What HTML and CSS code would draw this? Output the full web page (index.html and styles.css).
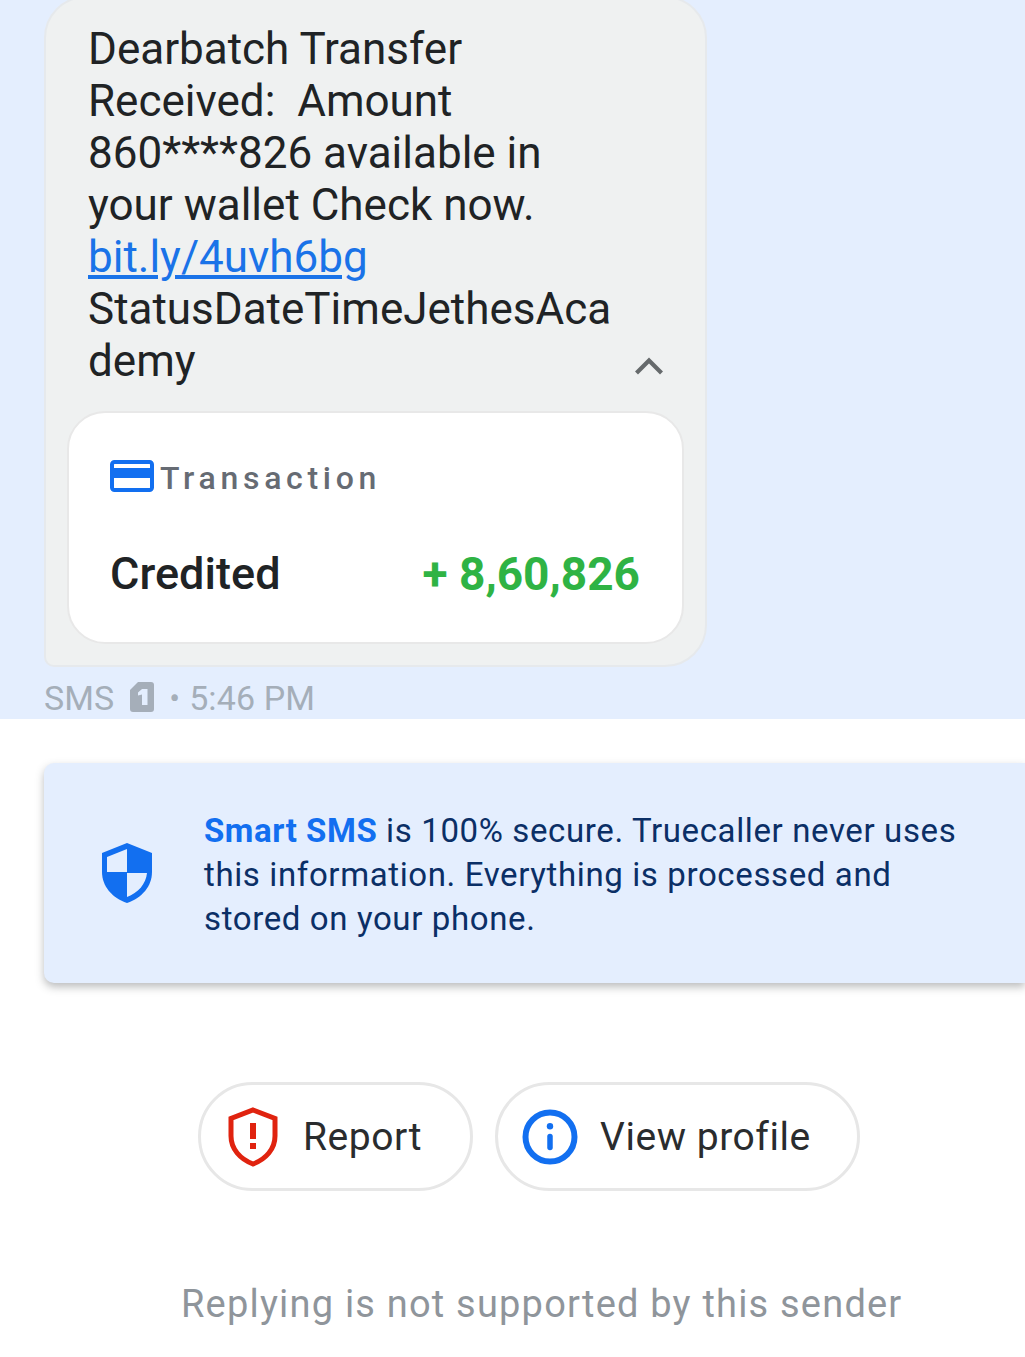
FILE: index.html
```html
<!DOCTYPE html>
<html lang="en">
<head>
<meta charset="utf-8">
<title>Message</title>
<link rel="stylesheet" href="styles.css">
</head>
<body>
<main class="screen">
  <section class="thread">
    <article class="bubble">
      <div class="message">
        <p class="message-text">Dearbatch Transfer<br>Received:&nbsp; Amount<br>860****826 available in<br>your wallet Check now.<br><a class="link" href="#">bit.ly/4uvh6bg</a><br>StatusDateTimeJethesAca<br>demy</p>
        <svg class="chevron" viewBox="0 0 30 18" aria-hidden="true"><path d="M2.500 16 15 3.500 27.500 16" fill="none" stroke="#666a6c" stroke-width="4.200"/></svg>
      </div>
      <div class="card">
        <div class="card-head">
          <svg class="card-icon" viewBox="0 0 44 32" aria-hidden="true"><rect x="2" y="2" width="40" height="28" rx="2.500" fill="none" stroke="#126ff0" stroke-width="4"/><rect x="2" y="8" width="40" height="10" fill="#126ff0"/></svg>
          <span class="card-title">Transaction</span>
        </div>
        <div class="card-row">
          <span class="card-label">Credited</span>
          <span class="card-amount">+ 8,60,826</span>
        </div>
      </div>
    </article>
    <div class="meta">
      <span>SMS</span>
      <svg class="sim" viewBox="0 0 24 30" aria-hidden="true"><path d="M8 0h13a3 3 0 0 1 3 3v24a3 3 0 0 1-3 3H3a3 3 0 0 1-3-3V8z" fill="#a5aeb9"/><path d="M12 7h5.500v16H12V12.500L8 13.500V10.500z" fill="#e4eefe"/></svg>
      <span class="meta-dot">•</span>
      <span>5:46 PM</span>
    </div>
  </section>
  <section class="lower">
    <aside class="notice">
      <svg class="notice-icon" viewBox="0 0 50 60" aria-hidden="true"><path d="M25 0 50 10v19c0 14-10 26-25 31C10 55 0 43 0 29V10z" fill="#126ff0"/><path d="M25 6 5 14v15h20zM25 30v24c11-4 19-13 20-24z" fill="#e4eefe"/></svg>
      <p class="notice-text"><strong class="notice-strong">Smart SMS</strong> is 100% secure. Truecaller never uses this information. Everything is processed and stored on your phone.</p>
    </aside>
    <div class="actions">
      <button class="pill pill-report" type="button">
        <svg class="pill-icon-report" viewBox="0 0 50 60" aria-hidden="true"><path d="M25 3 47 11.500V29c0 13-9 23-22 28C12 52 3 42 3 29V11.500z" fill="none" stroke="#e0230f" stroke-width="5"/><rect x="22" y="16" width="6" height="16" fill="#e0230f"/><rect x="22" y="36" width="6" height="6" fill="#e0230f"/></svg>
        <span>Report</span>
      </button>
      <button class="pill pill-profile" type="button">
        <svg class="pill-icon-info" viewBox="0 0 56 56" aria-hidden="true"><circle cx="28" cy="28" r="24.500" fill="none" stroke="#126ff0" stroke-width="6"/><circle cx="28" cy="17.300" r="3.200" fill="#126ff0"/><path d="M28 27.500V38.500" stroke="#126ff0" stroke-width="5.500" stroke-linecap="round"/></svg>
        <span>View profile</span>
      </button>
    </div>
    <p class="reply-note">Replying is not supported by this sender</p>
  </section>
</main>
</body>
</html>
```
FILE: styles.css
```css
* {
  box-sizing: border-box;
}

html,
body {
  margin: 0;
  padding: 0;
  background: #fff;
}

.screen {
  width: 1025px;
  height: 1357px;
  overflow: hidden;
  font-family: Roboto, "Liberation Sans", sans-serif;
}

.thread {
  height: 719px;
  overflow: hidden;
  background: #e4eefe;
  padding-left: 44px;
}

.bubble {
  width: 663px;
  height: 671px;
  margin-top: -4px;
  padding: 25px 21px 21px;
  background: #eff1f1;
  border: 2px solid #e6e9ec;
  border-radius: 42px 42px 42px 10px;
}

.message {
  position: relative;
  padding-left: 21px;
  height: 388px;
}

.message-text {
  margin: 0;
  font-size: 44px;
  line-height: 52px;
  color: #202325;
  white-space: nowrap;
}

.link {
  color: #1a73e8;
}

.chevron {
  position: absolute;
  right: 20px;
  bottom: 36px;
  width: 30px;
  height: 18px;
}

.card {
  height: 233px;
  background: #fff;
  border: 2px solid #e8e8e8;
  border-radius: 38px;
  padding: 48px 42px 0 41px;
}

.card-head {
  display: flex;
  align-items: center;
  gap: 6px;
  height: 34px;
}

.card-icon {
  width: 44px;
  height: 32px;
  margin-bottom: 5px;
  flex: none;
}

.card-title {
  font-size: 32px;
  font-weight: 500;
  letter-spacing: 4.7px;
  color: #666b73;
}

.card-row {
  display: flex;
  justify-content: space-between;
  align-items: center;
  margin-top: 55px;
  font-size: 45px;
  font-weight: 500;
  line-height: 48px;
  letter-spacing: 0.05px;
}

.card-label {
  color: #202325;
}

.card-amount {
  color: #2fb344;
  font-size: 46px;
  font-weight: 700;
  letter-spacing: 0;
}

.meta {
  display: flex;
  align-items: center;
  height: 38px;
  margin-top: 12px;
  font-size: 34px;
  letter-spacing: 0.1px;
  color: #a5aeb9;
  white-space: nowrap;
}

.sim {
  width: 24px;
  height: 30px;
  margin: 0 15px 3px 16px;
}

.meta-dot {
  margin-right: 9px;
  font-size: 32px;
  letter-spacing: 0;
}

.lower {
  padding-top: 44px;
}

.notice {
  display: flex;
  align-items: center;
  height: 220px;
  margin-left: 44px;
  padding-left: 58px;
  background: #e4eefe;
  border-radius: 10px 0 0 10px;
  box-shadow: 0 4px 8px rgba(60, 64, 67, 0.35);
}

.notice-icon {
  width: 50px;
  height: 60px;
  flex: none;
}

.notice-text {
  margin: 0 0 0 52px;
  padding-top: 4px;
  width: 770px;
  font-size: 33px;
  line-height: 44px;
  letter-spacing: 0.62px;
  color: #0b2f66;
}

.notice-strong {
  color: #126ff0;
  font-weight: 700;
  letter-spacing: 0.55px;
}

.actions {
  display: flex;
  gap: 22px;
  margin-top: 99px;
  margin-left: 198px;
}

.pill {
  display: flex;
  align-items: center;
  height: 109px;
  background: #fff;
  border: 3px solid #e7e7e7;
  border-radius: 55px;
  font-family: inherit;
  font-size: 39px;
  letter-spacing: 0.55px;
  color: #2a2c2e;
  padding: 0;
}

.pill-report {
  width: 275px;
  padding-left: 27px;
  gap: 25px;
}

.pill-profile {
  width: 365px;
  padding-left: 24px;
  gap: 22px;
}

.pill-icon-report {
  width: 50px;
  height: 60px;
  flex: none;
}

.pill-icon-info {
  width: 56px;
  height: 56px;
  flex: none;
}

.reply-note {
  margin: 90px 0 0 181px;
  font-size: 38px;
  line-height: 46px;
  letter-spacing: 1.2px;
  color: #8f959b;
  white-space: nowrap;
}
```
